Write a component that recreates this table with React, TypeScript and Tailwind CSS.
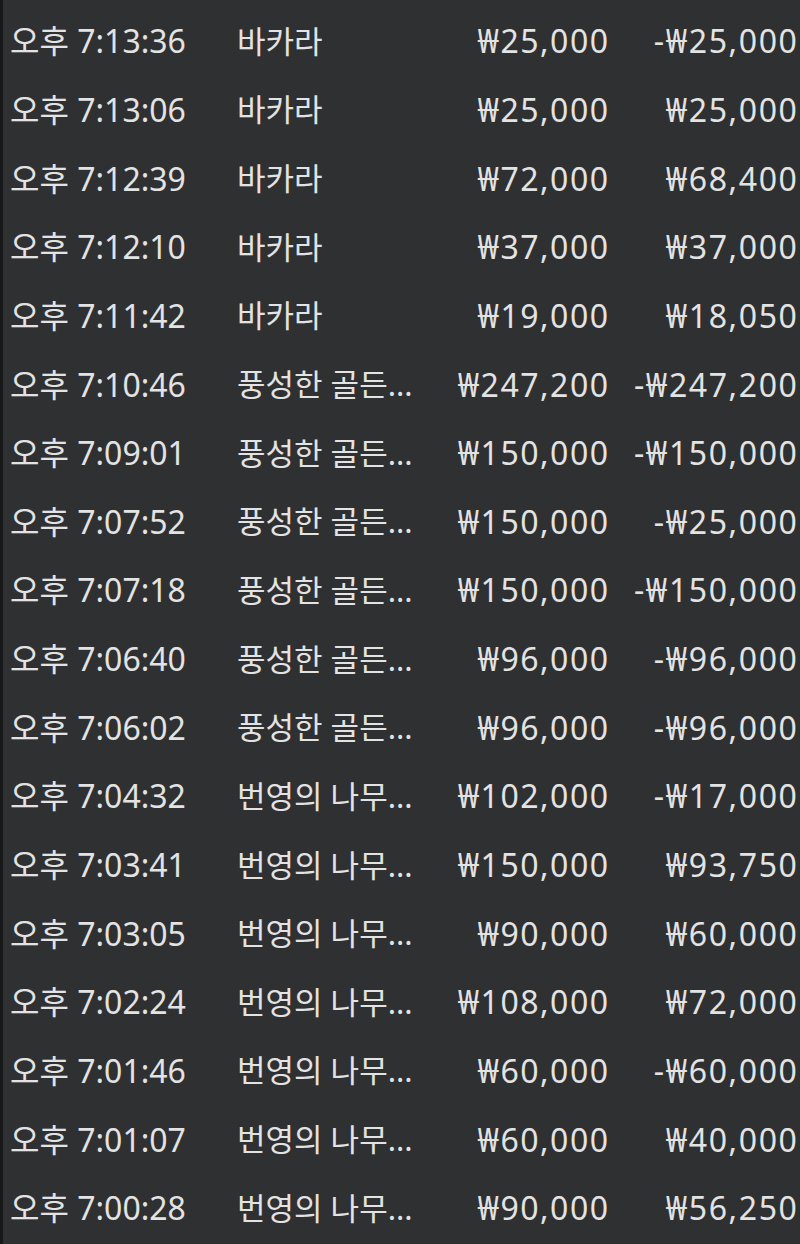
const ROWS: [string, string, string, string][] = [
  ["오후 7:13:36", "바카라", "₩25,000", "-₩25,000"],
  ["오후 7:13:06", "바카라", "₩25,000", "₩25,000"],
  ["오후 7:12:39", "바카라", "₩72,000", "₩68,400"],
  ["오후 7:12:10", "바카라", "₩37,000", "₩37,000"],
  ["오후 7:11:42", "바카라", "₩19,000", "₩18,050"],
  ["오후 7:10:46", "풍성한 골든...", "₩247,200", "-₩247,200"],
  ["오후 7:09:01", "풍성한 골든...", "₩150,000", "-₩150,000"],
  ["오후 7:07:52", "풍성한 골든...", "₩150,000", "-₩25,000"],
  ["오후 7:07:18", "풍성한 골든...", "₩150,000", "-₩150,000"],
  ["오후 7:06:40", "풍성한 골든...", "₩96,000", "-₩96,000"],
  ["오후 7:06:02", "풍성한 골든...", "₩96,000", "-₩96,000"],
  ["오후 7:04:32", "번영의 나무...", "₩102,000", "-₩17,000"],
  ["오후 7:03:41", "번영의 나무...", "₩150,000", "₩93,750"],
  ["오후 7:03:05", "번영의 나무...", "₩90,000", "₩60,000"],
  ["오후 7:02:24", "번영의 나무...", "₩108,000", "₩72,000"],
  ["오후 7:01:46", "번영의 나무...", "₩60,000", "-₩60,000"],
  ["오후 7:01:07", "번영의 나무...", "₩60,000", "₩40,000"],
  ["오후 7:00:28", "번영의 나무...", "₩90,000", "₩56,250"],
];

export default function App() {
  return (
    <div
      className="flex h-[1244px] w-[800px] overflow-hidden bg-[#2f3032] text-[#e3e3e3]"
      style={{ fontFamily: '"Noto Sans", "Noto Sans CJK KR", sans-serif' }}
    >
      <div className="w-[3px] shrink-0 bg-[#17181a]" />
      <ul className="flex-1 pt-[7px]">
        {ROWS.map(([time, game, bet, result]) => (
          <li
            key={time}
            className="grid h-[68.65px] grid-cols-[234px_200px_171px_189px] items-center whitespace-nowrap text-[32px] leading-none"
          >
            <span className="pl-[7px]">{time}</span>
            <span className="text-[31px]">{game}</span>
            <span className="-mr-[1.5px] text-right tracking-[1.5px]">{bet}</span>
            <span className="-mr-[1.5px] text-right tracking-[1.6px]">{result}</span>
          </li>
        ))}
      </ul>
    </div>
  );
}
